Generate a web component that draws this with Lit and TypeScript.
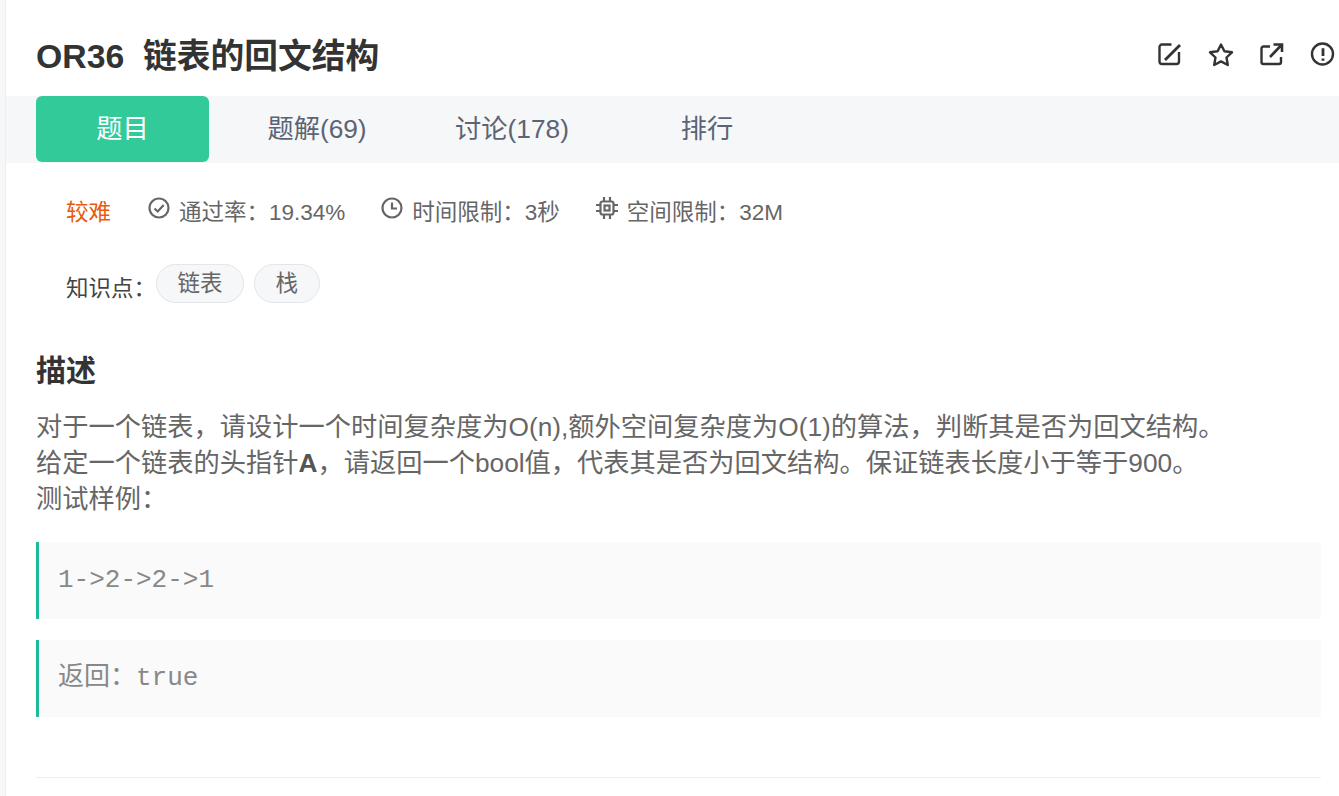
import {LitElement, html, css} from 'lit';
import {customElement} from 'lit/decorators.js';

const tabs = [
  {label: '题目', cls: 'tab active'},
  {label: '题解(69)', cls: 'tab t1'},
  {label: '讨论(178)', cls: 'tab t2'},
  {label: '排行', cls: 'tab t3'},
];

@customElement('app-root')
export class AppRoot extends LitElement {
  static styles = css`
    :host {
      display: block;
      height: 796px;
      overflow: hidden;
      background: #fff;
      font-family: "Liberation Sans", "Noto Sans CJK SC", sans-serif;
      color: #333;
    }

    .page {
      height: 796px;
      margin-left: 5px;
      border-left: 1px solid #eee;
      box-shadow: -5px 0 0 #f7f7f7;
      box-sizing: border-box;
      overflow: hidden;
    }

    .head {
      height: 96px;
      box-sizing: border-box;
      padding-top: 16px;
      padding-left: 30px;
      display: flex;
      align-items: center;
      justify-content: space-between;
    }

    h1 {
      margin: 0;
      font-size: 33.75px;
      line-height: 44px;
      font-weight: 700;
      color: #333;
      white-space: pre;
    }

    .actions {
      display: flex;
      gap: 25px;
      margin-bottom: 2px;
      width: 182px;
      flex: none;
      box-sizing: border-box;
    }

    .actions svg {
      width: 26px;
      height: 26px;
      flex: none;
      fill: none;
      stroke: #333;
      stroke-width: 2.4;
    }

    .tabs {
      height: 67px;
      background: #f6f7f9;
      padding-left: 30px;
      display: flex;
      align-items: flex-start;
    }

    .tab {
      height: 66px;
      line-height: 67px;
      font-size: 26.25px;
      color: #5b6475;
      text-align: center;
      flex: none;
    }

    .active {
      width: 173px;
      background: #32ca99;
      color: #fff;
      border-radius: 6px;
    }

    .t1 { width: 216px; }
    .t2 { width: 174px; }
    .t3 { width: 216px; }

    .meta {
      margin-top: 27px;
      padding-left: 60px;
      height: 40px;
      display: flex;
      align-items: center;
      font-size: 22.5px;
      color: #666;
      white-space: nowrap;
    }

    .level {
      color: #e8590c;
      margin-right: 36px;
    }

    .stat {
      display: flex;
      align-items: center;
      gap: 8px;
      margin-right: 35px;
    }

    .stat svg {
      width: 24px;
      height: 24px;
      margin-bottom: 4px;
      fill: none;
      stroke: #666;
      stroke-width: 2.2;
      flex: none;
    }

    .topics {
      margin-top: 34px;
      padding-left: 60px;
      display: flex;
      align-items: center;
      font-size: 22.5px;
      color: #444;
    }

    .topics .label {
      padding-top: 4px;
      width: 90px;
    }

    .tag {
      height: 37px;
      line-height: 37px;
      padding: 0 20.5px;
      margin-right: 10px;
      border: 1px solid #e3e5e8;
      border-radius: 20px;
      background: #f6f7f9;
      color: #666;
    }

    .content {
      padding-left: 30px;
      padding-right: 18px;
    }

    h2 {
      margin: 46px 0 0;
      font-size: 30px;
      line-height: 44px;
      font-weight: 700;
      color: #333;
    }

    p {
      margin: 16px 0 0;
      font-size: 26.25px;
      line-height: 36px;
      color: #666;
      white-space: nowrap;
    }

    p b {
      color: #555;
    }

    pre {
      margin: 25px 0 0;
      height: 77px;
      line-height: 77px;
      box-sizing: border-box;
      padding-left: 19px;
      background: #fafafa;
      border-left: 3px solid #1abc9c;
      font-family: "Liberation Mono", "Noto Sans CJK SC", monospace;
      font-size: 26px;
      color: #888;
    }

    pre + pre {
      margin-top: 21px;
    }

    hr {
      margin: 60px 0 0;
      border: 0;
      border-top: 1px solid #eee;
    }
  `;

  render() {
    return html`
      <div class="page">
        <div class="head">
          <h1>OR36  链表的回文结构</h1>
          <div class="actions">
            <svg viewBox="0 0 26 26">
              <path d="M14.500 2.500H5A2.500 2.500 0 0 0 2.500 5v14.500A2.500 2.500 0 0 0 5 22h14.500a2.500 2.500 0 0 0 2.500-2.500V10"/>
              <path d="M8 18 23 3" stroke-width="2.800"/>
            </svg>
            <svg viewBox="0 0 26 26">
              <path stroke-linejoin="round" d="M13 2.500l3.400 6.700 7.600 1.100-5.500 5.200 1.300 7.500-6.800-3.600-6.800 3.600 1.300-7.500-5.500-5.200 7.600-1.100z"/>
            </svg>
            <svg viewBox="0 0 26 26">
              <path d="M11 4.500H4.500a2 2 0 0 0-2 2V20a2 2 0 0 0 2 2H20a2 2 0 0 0 2-2v-5"/>
              <path d="M11 15 22 3.500M14.500 2.500H23V10" stroke-width="2.600"/>
            </svg>
            <svg viewBox="0 0 26 26">
              <circle cx="12.500" cy="12" r="10.500"/>
              <path d="M13 6.300v7.700M13 16.500v2.200" stroke-width="2.800"/>
            </svg>
          </div>
        </div>

        <div class="tabs">
          ${tabs.map((t) => html`<div class=${t.cls}>${t.label}</div>`)}
        </div>

        <div class="meta">
          <span class="level">较难</span>
          <span class="stat">
            <svg viewBox="0 0 24 24">
              <circle cx="12" cy="12" r="9.500"/>
              <path d="M7.500 12.500l3.200 3 6-6.500"/>
            </svg>
            通过率：19.34%
          </span>
          <span class="stat">
            <svg viewBox="0 0 24 24">
              <circle cx="12" cy="12" r="9.500"/>
              <path d="M12 6.500V12.500H17"/>
            </svg>
            时间限制：3秒
          </span>
          <span class="stat">
            <svg viewBox="0 0 24 24">
              <rect x="5.500" y="5.500" width="13" height="13" rx="2"/>
              <rect x="9.500" y="9.500" width="5" height="5"/>
              <path d="M9 1V5M15 1V5M9 19v4M15 19v4M1 9H5M1 15H5M19 9h4M19 15h4"/>
            </svg>
            空间限制：32M
          </span>
        </div>

        <div class="topics">
          <span class="label">知识点：</span>
          <span class="tag">链表</span>
          <span class="tag">栈</span>
        </div>

        <div class="content">
          <h2>描述</h2>
          <p>对于一个链表，请设计一个时间复杂度为O(n),额外空间复杂度为O(1)的算法，判断其是否为回文结构。<br>给定一个链表的头指针<b>A</b>，请返回一个bool值，代表其是否为回文结构。保证链表长度小于等于900。<br>测试样例：</p>
          <pre>1->2->2->1</pre>
          <pre>返回：true</pre>
          <hr>
        </div>
      </div>
    `;
  }
}
